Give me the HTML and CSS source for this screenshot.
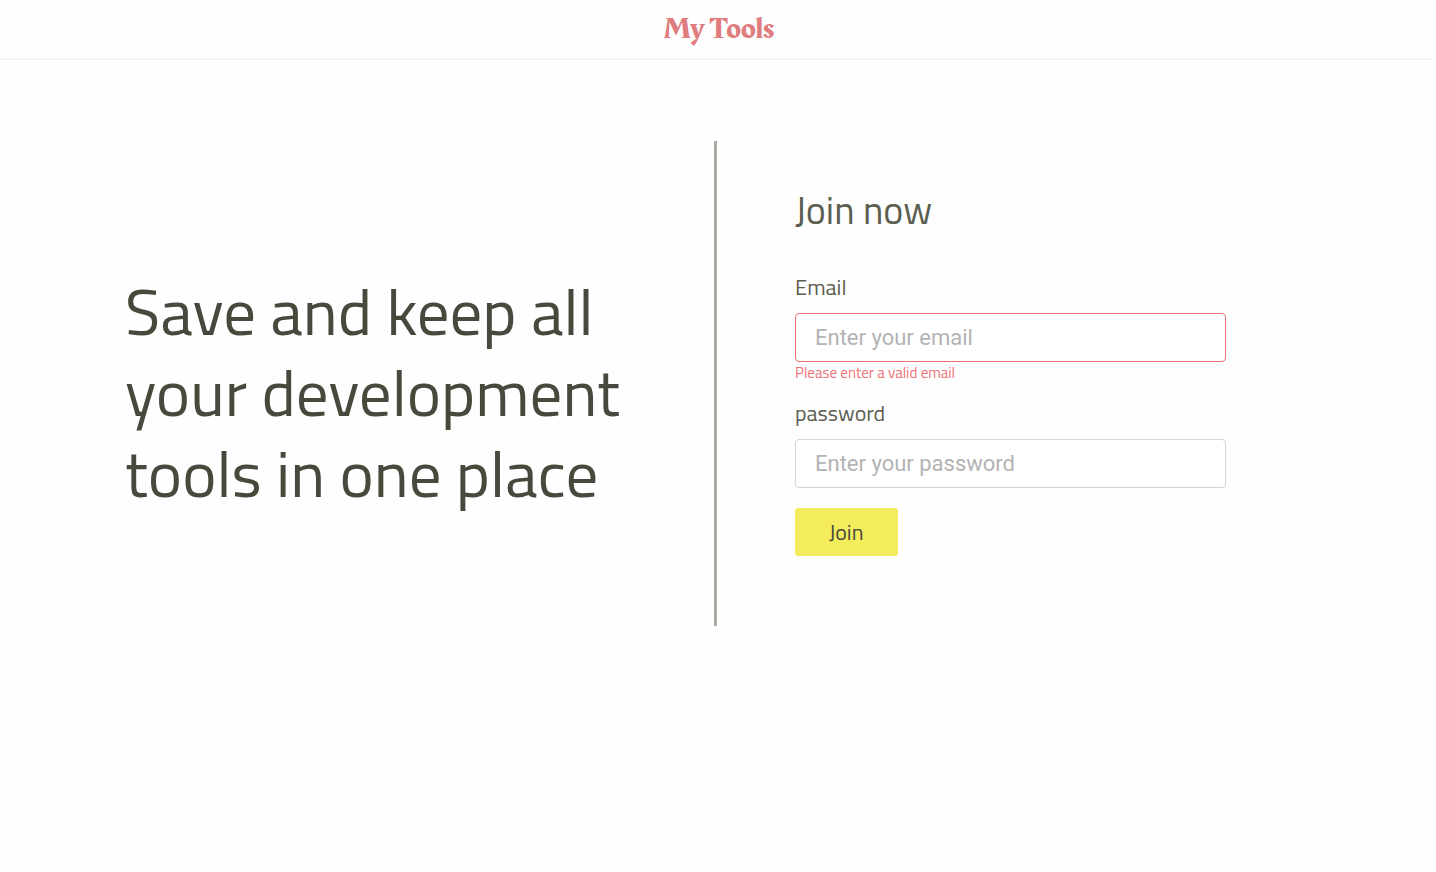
FILE: index.html
```html
<!DOCTYPE html>
<html lang="en">
<head>
  <meta charset="utf-8">
  <meta name="viewport" content="width=device-width, initial-scale=1">
  <title>My Tools</title>
  <link rel="stylesheet" href="styles.css">
</head>
<body>
  <header class="header"><a class="logo" href="#">My Tools</a></header>
  <main class="main">
    <section class="intro">
      <h1 class="headline">Save and keep all<br>your development<br>tools in one place</h1>
    </section>
    <section class="join">
      <form class="form" novalidate>
        <h2 class="form-title">Join now</h2>
        <div class="field">
          <label class="label" for="email">Email</label>
          <input class="input input-invalid" id="email" type="email" placeholder="Enter your email" aria-invalid="true" aria-describedby="email-error">
          <p class="error" id="email-error">Please enter a valid email</p>
        </div>
        <div class="field">
          <label class="label" for="password">password</label>
          <input class="input" id="password" type="password" placeholder="Enter your password">
        </div>
        <button class="button" type="submit">Join</button>
      </form>
    </section>
  </main>
</body>
</html>
```
FILE: styles.css
```css
* {
  box-sizing: border-box;
}

body {
  margin: 0;
  padding-right: 4px;
  background: #fefefe;
  color: #5c5e50;
  font-family: "Titillium Web", Roboto, sans-serif;
}

.header {
  display: flex;
  justify-content: center;
  height: 60px;
  padding: 11px 0 0 6px;
  border-bottom: 2px solid #f4f4f4;
}

.logo {
  color: #df7c7e;
  font: 400 30px/36px Rakkas, "Liberation Serif", serif;
  text-decoration: none;
}

.main {
  display: grid;
  grid-template-columns: 1fr 1fr;
  padding: 81px 0;
}

.intro {
  display: flex;
  align-items: center;
  padding: 16px 0 0 125px;
}

.headline {
  margin: 0;
  color: #48493d;
  font-size: 65px;
  font-weight: 400;
  line-height: 81px;
  white-space: nowrap;
}

.join {
  min-height: 485px;
  margin-left: -2px;
  padding: 39px 0 0 78px;
  border-left: 3px solid #a9aaa2;
}

.form {
  width: 431px;
  max-width: 100%;
}

.form-title {
  margin: 0 0 34px;
  font-size: 38px;
  font-weight: 400;
  line-height: 60px;
}

.field {
  margin-bottom: 16px;
}

.label {
  display: block;
  padding-bottom: 13px;
  font-size: 22px;
  font-weight: 400;
  line-height: 26px;
}

.input {
  display: block;
  width: 100%;
  height: 49px;
  padding: 0 19px;
  border: 1px solid #d4d4d4;
  border-radius: 4px;
  background: #fff;
  color: #48493d;
  font: 400 22px Roboto, sans-serif;
}

.input::placeholder {
  color: #b3b3b3;
  opacity: 1;
}

.input-invalid {
  border-color: #e87074;
}

.error {
  margin: 0;
  color: #ed7377;
  font-size: 15px;
  line-height: 22px;
}

.button {
  display: block;
  margin-top: 20px;
  padding: 0 34px;
  border: 0;
  border-radius: 3px;
  background: #f3ec5d;
  color: #48493d;
  font: inherit;
  font-size: 22px;
  line-height: 48px;
}
```
